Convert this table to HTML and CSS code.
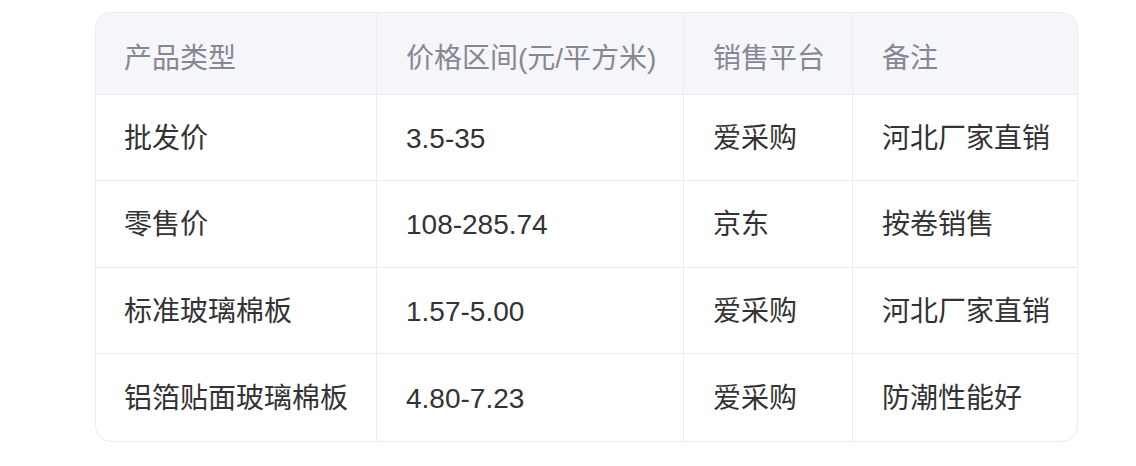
FILE: index.html
```html
<!DOCTYPE html>
<html lang="zh-CN">
<head>
<meta charset="utf-8">
<link rel="stylesheet" href="styles.css">
</head>
<body>
<div class="table-wrap">
  <table class="price-table">
    <colgroup>
      <col class="c1"><col class="c2"><col class="c3"><col class="c4">
    </colgroup>
    <thead>
      <tr><th>产品类型</th><th>价格区间(元/平方米)</th><th>销售平台</th><th>备注</th></tr>
    </thead>
    <tbody>
      <tr class="r-a"><td>批发价</td><td>3.5-35</td><td>爱采购</td><td>河北厂家直销</td></tr>
      <tr class="r-b"><td>零售价</td><td>108-285.74</td><td>京东</td><td>按卷销售</td></tr>
      <tr class="r-a"><td>标准玻璃棉板</td><td>1.57-5.00</td><td>爱采购</td><td>河北厂家直销</td></tr>
      <tr class="r-last"><td>铝箔贴面玻璃棉板</td><td>4.80-7.23</td><td>爱采购</td><td>防潮性能好</td></tr>
    </tbody>
  </table>
</div>
</body>
</html>
```
FILE: styles.css
```css
html, body {
  margin: 0;
  padding: 0;
  background: #ffffff;
}
body {
  font-family: "Liberation Sans", "Noto Sans CJK SC", sans-serif;
  padding: 12px 0 0 95px;
}
.table-wrap {
  width: 981px;
  border: 1px solid #eaecf0;
  border-radius: 16px;
  overflow: hidden;
}
.price-table {
  border-collapse: separate;
  border-spacing: 0;
  table-layout: fixed;
  width: 981px;
  font-size: 28px;
}
.c1 { width: 280px; }
.c2 { width: 307px; }
.c3 { width: 169px; }
.c4 { width: 225px; }
.price-table th,
.price-table td {
  text-align: left;
  padding: 2px 0 0 28px;
  white-space: nowrap;
  border-bottom: 1px solid #eaecf0;
  border-left: 1px solid #eaecf0;
  vertical-align: middle;
  line-height: 1.2;
}
.price-table th:first-child,
.price-table td:first-child {
  border-left: none;
}
.price-table th:not(:first-child),
.price-table td:not(:first-child) {
  padding-left: 29px;
}
.price-table th {
  background: #f5f6fa;
  color: #878792;
  font-weight: normal;
  height: 70px;
  padding-top: 11px;
}
.price-table td {
  color: #333333;
  height: 83px;
}
.r-b td { height: 84px; }
.r-last td { height: 85px; border-bottom: none; }
```
